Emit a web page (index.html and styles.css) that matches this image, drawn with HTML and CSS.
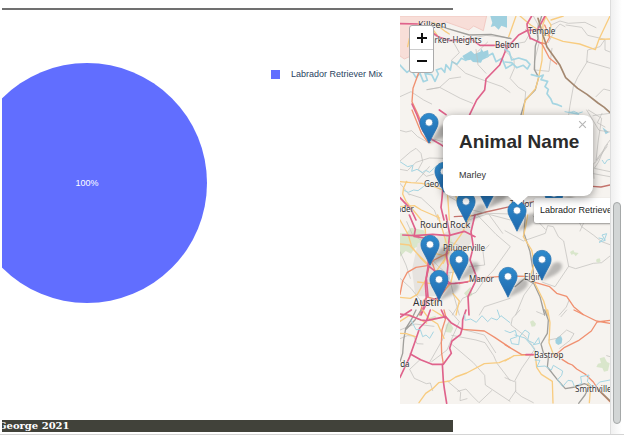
FILE: index.html
```html
<!DOCTYPE html>
<html lang="en">
<head>
<meta charset="utf-8">
<title>Animal dashboard</title>
<link rel="stylesheet" href="styles.css">
</head>
<body>
<svg class="defs" aria-hidden="true">
  <defs>
    <linearGradient id="pin-fill" x1="0" y1="0" x2="0" y2="1">
      <stop offset="0" stop-color="#2e8bcd"/><stop offset="1" stop-color="#2068ac"/>
    </linearGradient>
    <filter id="soft" x="-50%" y="-50%" width="200%" height="200%"><feGaussianBlur stdDeviation="2"/></filter>
    <symbol id="pin" viewBox="0 0 25 41" overflow="visible">
      <path d="M12 41L27 18Q36 13 39 20Q40 27 29 33z" fill="#333" opacity=".3" filter="url(#soft)"/>
      <path d="M12.5.5C5.8.5.5 5.8.5 12.5C.5 19 4 22 12.5 40C21 22 24.500 19 24.500 12.500C24.500 5.800 19.200.5 12.500.5z" fill="url(#pin-fill)" stroke="#2973b0"/>
      <circle cx="12.500" cy="12.500" r="5" fill="#fff" stroke="#3275ae"/>
    </symbol>
  </defs>
</svg>
<div class="window">
  <main class="content">
    <hr class="rule">
    <div class="panels">
      <section class="chart" aria-label="Breed share">
        <div class="pie"><span>100%</span></div>
        <div class="legend"><i class="swatch"></i><span>Labrador Retriever Mix</span></div>
      </section>
      <section class="map" aria-label="Map">
        <svg class="tiles" viewBox="0 0 630 1164" preserveAspectRatio="xMinYMin slice" aria-hidden="true">
          <rect width="900" height="1164" fill="#f6f3ef"/>
          <g transform="translate(-12 -18)">
            <path class="zone" d="M0 18H272L262 62L233 48L218 60L150 36L113 48L97 34L65 45L45 138L25 147L12 138z"/>
            <path class="lake" d="M283 18h50v35l-17-6-8 12-12-11-12 3 5-12zM199 138l14-8 12-8 10 10 18-7 3-9 6 9 14-5 3 20-20 10-4 8-24-2-7-7-16 3z"/>
            <path class="river" d="M12 165L24 178L33 187L45 178L60 203L72 190L82 215L94 211L87 190L107 194L117 214L127 192L121 180L136 175L146 187L150 164L163 180L168 155L183 163L196 145L209 151M272 140L290 130L300 155L318 145L330 175L350 163"/>
            <path class="minor" d="M106 70L130 85L172 96L190 128L166 151L209 190L250 206L318 230L342 247M240 118L246 164L270 190M275 96L245 125M194 201L160 206L130 233L92 239M12 260L45 245L83 270L107 282M94 239L131 232L193 265L230 280M172 96L270 76L342 84"/>
            <path class="grey" d="M107 38L153 55L220 75L285 73L345 86"/>
            <path class="yellow" d="M112 37L149 65L160 72M40 85L35 110M108 55L123 75"/>
            <path class="pink" d="M12 41L72 42L97 60L130 82L160 91L202 90L222 85L252 106L310 106L342 108"/>
            <path class="pink" d="M342 100L327 126L311 165L270 207L266 240L242 270L221 314"/>
            <path class="orange" d="M68 188L51 235L48 275L64 309L92 375L101 383"/>
            <path class="pink" d="M48 282L63 315L81 363L102 385L130 401L150 414"/>
          </g>
          <g transform="translate(315 -18)">
            <path class="minor" d="M62 58L72 75L60 96L20 103L0 122L27 148L28 175L15 205L40 232L62 245L60 270M85 18L98 42L102 100L88 155L90 180L132 184L141 115M180 50L165 42L153 55L130 98M183 45L230 52L248 76L300 88L285 110L248 120L245 155L315 175M248 153L218 202L205 230L195 286L191 314M300 90V120L315 126M138 45L165 33L190 40L240 37L273 53M273 260L296 237L315 242"/>
            <path class="grey" d="M110 18L96 64L99 86L91 108L88 178L101 202L91 239L61 270L48 315"/>
            <path class="yellow" d="M45 18L77 45L123 75L174 94L224 102L271 119L282 88L315 87M282 88L315 18M138 30L175 18M123 18L114 42L111 151L101 202L92 235L60 273L54 315M33 18L11 80M133 77L138 45L121 18"/>
            <path class="pink" d="M80 18L66 42L68 61L98 59L120 18M68 61L41 75L0 120M75 84L109 100M68 61L76 86"/>
            <path class="orange" d="M119 45L134 81L123 102L109 98L133 144L155 162"/>
            <path class="highway" d="M99 25L115 79L126 111L165 166L182 203L218 235L246 253L279 279L298 292L315 308"/>
            <path class="river" d="M0 118L13 126L20 150L41 144L64 151L75 163L67 177L55 166L35 173L20 158L0 156M79 194L91 197L102 200L115 195L108 209L128 214L120 230L130 238L126 251L137 266L143 280L158 284L169 289M193 307L220 312"/>
          </g>
          <g transform="translate(-12 282)">
            <path class="minor" d="M12 61L30 66L47 62L65 80L92 95L115 88L140 95M12 153L43 126L60 115L75 130L80 154L67 178L91 199L112 193M12 178L34 182L60 157L100 144L140 145M39 252L76 264L115 300L126 330M12 220L40 255M60 216L100 170"/>
            <path class="river thin" d="M12 155L35 170L51 166L47 184L63 178L79 188L89 181L101 187L120 169M23 241L37 247L53 240L66 242L82 230L101 214"/>
            <path class="yellow" d="M12 215L45 218L78 220L115 230L140 240M32 214L23 233L20 252L30 274L76 330M12 290L55 287L76 300L131 324M180 259L190 300M155 257L160 330"/>
            <path class="orange" d="M48 0L77 71L96 97L103 98"/>
            <path class="pink" d="M140 240L138 265L135 292L144 330M12 263L45 298L60 330M130 0L150 14"/>
            <path class="dark-red" d="M175 320L230 317L270 306L342 290L412 275"/>
            <path class="minor" d="M160 260L230 300L343 330M220 330L280 310L342 312"/>
          </g>
          <g transform="translate(315 282)">
            <path class="lake" d="M292 52l20 15-10 6z"/>
            <path class="river thin" d="M180 5L195 8L206 4L220 10L232 6"/>
            <path class="minor" d="M250 0L290 25L280 90L273 151L308 103M245 0L282 61L315 66M264 17L315 10M315 90L300 110L280 157L268 175L315 185M291 10L277 38L300 51M306 110L275 153L264 163L267 205M260 190L315 200"/>
            <path class="dark-red" d="M262 229L288 231L315 225"/>
            <path class="river thin" d="M292 151L299 162L307 150L315 148"/>
          </g>
          <g transform="translate(-12 597)">
            <path class="park" d="M12 55h18l15-17 38 8 10 20-15 26-21 6-12 18-16-8-17 17z"/>
            <path class="urban" d="M65 85l45-15 34-15 35-20 55-25-10 75-18 25 25 28-60 26-40 80H58l-10-80z"/>
            <path class="park" d="M204 235l20-20 5 25-13 9zM150 60l17 12 5 20-10 8-20-9z"/>
            <path class="minor" d="M244 0L300 58L342 94M279 90L261 110L266 150L220 155M342 96L293 165L265 195L240 232L200 250L169 300M280 0L320 55M342 250L265 275L250 300M32 20L50 60L92 85L114 140L128 155L158 180L173 240L190 300M160 80L190 92L202 145L183 170L148 175M12 110L30 150L43 190M12 190L45 220L84 270"/>
            <path class="yellow" d="M12 15L37 60L47 95L73 128L100 155L89 194L64 238L43 250L12 247M86 25L90 70L105 112L151 124L172 168L164 207L142 230L107 270M12 87L40 90L60 112L93 145M125 0L140 46L154 95L147 132L120 170M224 0L197 56L160 108L142 145M171 236L190 258L180 300M65 201L107 206L122 235M220 95L180 106L150 98"/>
            <path class="orange" d="M12 238L20 198L34 172L60 157L99 151L114 135L154 115M71 300L82 257L94 246L125 255L160 206M190 206L225 197L265 188L319 184M110 147L121 180L109 216"/>
            <path class="pink" d="M40 0L58 43L54 64L85 69L99 95L96 155L88 205L91 250L75 300M20 60L56 62L110 58L158 62L205 49L237 65M150 0L161 57L157 95L151 120L156 150L150 206L126 231M237 0L225 50L232 96L222 135L233 163L243 190L216 245L219 300M150 206L176 205L215 201M75 300L95 258L126 249L145 224"/>
            <path class="pink" d="M98 155L91 190L96 245M100 155L163 205"/>
          </g>
          <g transform="translate(315 597)">
            <path class="minor" d="M0 47L55 78L121 55L128 32L145 35L160 65L176 78L191 154L150 215L113 202M191 154L212 161L265 145L290 143L315 123M210 0L230 35L265 60L290 80L315 89M225 48L235 26M192 256L184 276L163 300M83 205L57 240L32 300M0 180L84 185M121 43L84 3"/>
            <path class="grey" d="M61 0L57 55L75 110L85 170L84 200L105 245L119 300M30 215L60 190L85 205"/>
            <path class="yellow" d="M68 0L62 35L55 65L80 105L88 145L78 178L92 210L116 258L128 300"/>
            <path class="orange" d="M32 184H62M0 184L32 184M90 202L134 215L155 235L185 244L206 275L235 299"/>
            <path class="river thin" d="M282 69L295 72L282 82L301 76L291 60L305 56L298 75"/>
            <path class="park" d="M195 111l10-6 3 7 13 2-9 10-5-7-8 2zM275 132l9-2 3 8-7 6-7-5z"/>
          </g>
          <g transform="translate(-12 882)">
            <path class="park" d="M149 45l12-10 11 20-7 13-17-2zM96 25l22-8 5 10-20 7z"/>
            <path class="minor" d="M160 0L190 35L170 80L153 120L107 155M170 105L232 158L266 196L268 225L342 274M167 76L240 90L267 98L293 137L303 160L342 211M44 132L72 149L41 178L55 205L91 221L103 219L110 242M155 214L194 247L192 272L213 266M185 244L210 237L228 257L249 278L287 242M102 155L140 88L158 35M12 86L34 77L53 78L63 101L81 102M200 58L265 75L299 128M12 60L57 42L114 49"/>
            <path class="grey" d="M60 0L46 29L29 56L23 90L20 130L12 155M75 0L57 30L31 57"/>
            <path class="yellow" d="M12 70L31 71L58 80M69 278L89 250L110 236L128 218L161 213L179 201L212 189L265 161L310 158L342 144M80 0L98 25L125 42L144 85M110 0L146 22M12 34L42 15L92 39"/>
            <path class="orange" d="M144 0L150 22L138 60L136 100L137 130L142 162M200 58L265 63L296 82L342 113"/>
            <path class="pink" d="M103 0L91 33L71 54L57 95L40 143L12 202M12 12L37 15L75 30L91 32L149 20L165 38L198 58L193 74L168 93L161 115L166 130L142 163L108 163L74 149L43 132M210 0L200 29L199 58M136 0L147 24M139 162L142 213L145 236L152 280M12 22L46 0"/>
            <path class="river thin" d="M45 30L60 59L73 59L80 80L90 75L101 85L112 66M206 14L207 31L224 27L241 37L258 17L275 35L286 24L303 30L315 17L342 38M304 0L311 20"/>
          </g>
          <g transform="translate(315 882)">
            <path class="park" d="M75 35l9-4 9 10-3 8-10 1zM284 145l14-4 8 15 8 4-5 22-12 3-5-11-18-3 5-10 9-2z"/>
            <path class="lake" d="M151 90l7-9 10-3 4 9-2 13-10 5-8-5z"/>
            <path class="minor" d="M45 0L22 25L18 45L60 78L90 117L50 175L28 215L0 203M32 215L32 245L50 260L85 278M32 243L12 272M131 90L157 85L185 60L207 71L195 91L164 115M168 20L185 0M119 15L95 5M305 137L315 140"/>
            <path class="grey" d="M119 0L130 30L127 70L108 102L115 128L130 144L127 171L157 209L181 236L210 231L238 221L254 227L240 255L221 280"/>
            <path class="yellow" d="M128 0L135 38L132 98L145 133L170 140M0 153L27 137L88 134M92 144L95 172L109 193L142 214L144 279M249 220L256 240L253 278"/>
            <path class="orange" d="M0 104L30 122L50 134L83 134M145 140L179 112L220 92L259 63L276 36L315 31M207 0L274 33L315 40M171 148L190 160L202 165L215 177L240 192L265 216L280 239L315 275"/>
            <path class="highway" d="M279 238L315 273"/>
            <path class="pink" d="M63 134H86"/>
            <path class="river thin" d="M0 62L15 68L31 61L36 80L16 87L20 101L41 104L44 80L60 60L73 69L68 91L89 101L101 83L104 100L85 104M30 75L60 84L80 107L94 127M90 150L105 151L96 170L120 168L139 180L145 166L173 183L170 196L158 209L173 230L189 211L202 213L208 229L230 220L227 200L252 195L247 214L266 234L284 216L315 210"/>
          </g>
        </svg>

        <span class="town mid killeen">Killeen</span>
        <span class="town harker">Harker-Heights</span>
        <span class="town belton">Belton</span>
        <span class="town temple">Temple</span>
        <span class="town georgetown">Georg</span>
        <span class="town leander">Leander</span>
        <span class="town taylor">Taylor</span>
        <span class="town mid round-rock">Round Rock</span>
        <span class="town pflugerville">Pflugerville</span>
        <span class="town manor">Manor</span>
        <span class="town elgin">Elgin</span>
        <span class="town big austin">Austin</span>
        <span class="town bastrop">Bastrop</span>
        <span class="town buda">Buda</span>
        <span class="town smithville">Smithville</span>

        <button class="marker m1" aria-label="Marker"><svg><use href="#pin"/></svg></button>
        <button class="marker m2" aria-label="Marker"><svg><use href="#pin"/></svg></button>
        <button class="marker m3" aria-label="Marker"><svg><use href="#pin"/></svg></button>
        <button class="marker m4" aria-label="Marker"><svg><use href="#pin"/></svg></button>
        <button class="marker m6" aria-label="Marker"><svg><use href="#pin"/></svg></button>
        <button class="marker m7" aria-label="Marker"><svg><use href="#pin"/></svg></button>
        <button class="marker m8" aria-label="Marker"><svg><use href="#pin"/></svg></button>
        <button class="marker m9" aria-label="Marker"><svg><use href="#pin"/></svg></button>
        <button class="marker m10" aria-label="Marker"><svg><use href="#pin"/></svg></button>
        <button class="marker m11" aria-label="Marker"><svg><use href="#pin"/></svg></button>
        <button class="marker m5" aria-label="Marker"><svg><use href="#pin"/></svg></button>

        <div class="tooltip">Labrador Retriever Mix</div>
        <div class="popup">
          <button class="close" aria-label="Close"><svg viewBox="0 0 8 8"><path d="M1 1L7 7M7 1L1 7"/></svg></button>
          <h1>Animal Name</h1>
          <p>Marley</p>
        </div>
        <div class="zoom">
          <button aria-label="Zoom in"><svg viewBox="0 0 10 10"><path d="M5 0V10M0 5H10"/></svg></button>
          <button aria-label="Zoom out"><svg viewBox="0 0 10 10"><path d="M0 5H10"/></svg></button>
        </div>
      </section>
    </div>
    <footer class="footer"><span>George 2021</span></footer>
  </main>
  <div class="scroll"><div class="thumb"></div></div>
</div>
</body>
</html>
```

FILE: styles.css
```css
* { box-sizing: border-box; }
body {
  margin: 0;
  background: #fff;
  color: #333;
  font-family: "Liberation Sans", Arial, sans-serif;
  font-size: 9px;
  overflow: hidden;
}
button { border: 0; padding: 0; background: none; display: block; }
.defs { position: absolute; width: 0; height: 0; }

.window {
  display: grid;
  grid-template-columns: minmax(0, 1fr) 12px;
  height: calc(100vh - 1px);
  padding: 0 2px 0 2px;
  border-bottom: 1px solid #d4d4d4;
}
.content { overflow: hidden; padding-top: 8px; }
.rule {
  width: 74.2%;
  height: 2px;
  margin: 0 0 6px;
  border: 0;
  background: #707070;
}
.panels { display: grid; grid-template-columns: 398fr 210fr; }

.chart { position: relative; display: flex; align-items: flex-start; overflow: hidden; }
.pie {
  flex: none;
  display: grid;
  place-items: center;
  width: 240px;
  height: 240px;
  margin: 47px 0 0 -35px;
  border-radius: 50%;
  background: #616eff;
  color: #fff;
}
.legend {
  display: flex;
  align-items: center;
  gap: 11px;
  margin: 52px 0 0 64px;
  color: #2a3f5f;
  line-height: 12px;
  white-space: nowrap;
}
.swatch { width: 9px; height: 9px; background: #616eff; }

.map { position: relative; overflow: hidden; height: 388px; background: #f6f3ef; }
.tiles { display: block; width: 100%; height: 100%; }
.tiles path { fill: none; stroke-linejoin: round; stroke-linecap: round; }
.tiles .minor { stroke: #bdbbb8; stroke-width: 2; }
.tiles .grey { stroke: #a09f9b; stroke-width: 4; }
.tiles .yellow { stroke: #f8cc80; stroke-width: 4; }
.tiles .orange { stroke: #f09070; stroke-width: 4; }
.tiles .pink { stroke: #df628b; stroke-width: 5; }
.tiles .highway { stroke: #a48870; stroke-width: 5; }
.tiles .dark-red { stroke: #c4736c; stroke-width: 4; }
.tiles .river { stroke: #a5d5e2; stroke-width: 5; }
.tiles .river.thin { stroke-width: 3; }
.tiles .lake { fill: #9fd0df; }
.tiles .park { fill: #d9e6cb; }
.tiles .urban { fill: #e6e3df; }
.tiles .zone { fill: #f8ded8; stroke: #efbdb5; stroke-width: 2; }

.town {
  position: absolute;
  color: #333;
  font: 8px/12px "Noto Sans", sans-serif;
  white-space: nowrap;
  text-shadow: 0 0 1px #fff, 0 0 2px #fff;
}
.mid { font-size: 9px; }
.big { font-size: 10px; }
.killeen { left: 18px; top: 3px; }
.harker { left: 24px; top: 18px; }
.belton { left: 95px; top: 23px; }
.temple { left: 128px; top: 9px; }
.georgetown { left: 24px; top: 162px; }
.leander { left: -17px; top: 187px; }
.taylor { left: 110px; top: 182px; }
.round-rock { left: 20px; top: 203px; }
.pflugerville { left: 43px; top: 226px; }
.manor { left: 69px; top: 257px; }
.elgin { left: 124px; top: 255px; }
.austin { left: 13px; top: 280px; }
.bastrop { left: 134px; top: 333px; }
.buda { left: -10px; top: 342px; }
.smithville { left: 175px; top: 367px; }

.marker { position: absolute; width: 20px; height: 31px; margin: -31px 0 0 -10px; }
.marker svg { display: block; width: 100%; height: 100%; overflow: visible; }
.m1 { left: 29px; top: 128px; }
.m2 { left: 44px; top: 177px; }
.m3 { left: 66px; top: 207px; }
.m4 { left: 87px; top: 193px; }
.m5 { left: 117px; top: 216px; }
.m6 { left: 30px; top: 250px; }
.m7 { left: 59px; top: 265px; }
.m8 { left: 39px; top: 285px; }
.m9 { left: 108px; top: 282px; }
.m10 { left: 142px; top: 265px; }
.m11 { left: 154px; top: 199px; }

.tooltip {
  position: absolute;
  left: 134px;
  top: 182px;
  padding: 6px;
  border-radius: 2px;
  background: #fff;
  box-shadow: 0 1px 2px rgba(0, 0, 0, .4);
  color: #222;
  line-height: 13px;
  white-space: nowrap;
}
.popup {
  position: absolute;
  left: 43px;
  top: 99px;
  padding: 15px 16px 14px;
  width: 150px;
  border-radius: 9px;
  background: #fff;
  box-shadow: 0 2px 10px rgba(0, 0, 0, .4);
  white-space: nowrap;
}
.popup::after {
  content: "";
  position: absolute;
  left: 65px;
  top: 100%;
  border: solid transparent;
  border-width: 9px 10px 0;
  border-top-color: #fff;
}
.popup h1 { margin: 0 0 15px; color: #2b2b2b; font-size: 19px; line-height: 24px; }
.popup p { margin: 0; line-height: 13px; }
.close { position: absolute; right: 6px; top: 5px; width: 9px; height: 9px; }
.close svg { display: block; stroke: #b5b5b5; stroke-width: 1; }

.zoom {
  position: absolute;
  left: 9px;
  top: 9px;
  width: 25px;
  border: 1px solid #aaa;
  border-radius: 3px;
  background: #fff;
}
.zoom button { display: grid; place-items: center; width: 100%; height: 23px; }
.zoom button + button { border-top: 1px solid #ccc; }
.zoom svg { width: 10px; stroke: #111; stroke-width: 2; }

.footer {
  display: flex;
  width: 74.2%;
  height: 12px;
  margin-top: 16px;
  overflow: hidden;
  background: #41423a;
  color: #fff;
  font: bold 10px/12px "DejaVu Serif", serif;
}
.footer span { margin-left: -4px; }

.scroll { padding: 202px 2px 0; border-left: 1px solid #ddd; background: linear-gradient(90deg, #f0f0f0, #fff); }
.thumb { height: 222px; width: 8px; border: 1px solid #a5a8a8; border-radius: 4px; background: #d2d5d5; }
```
